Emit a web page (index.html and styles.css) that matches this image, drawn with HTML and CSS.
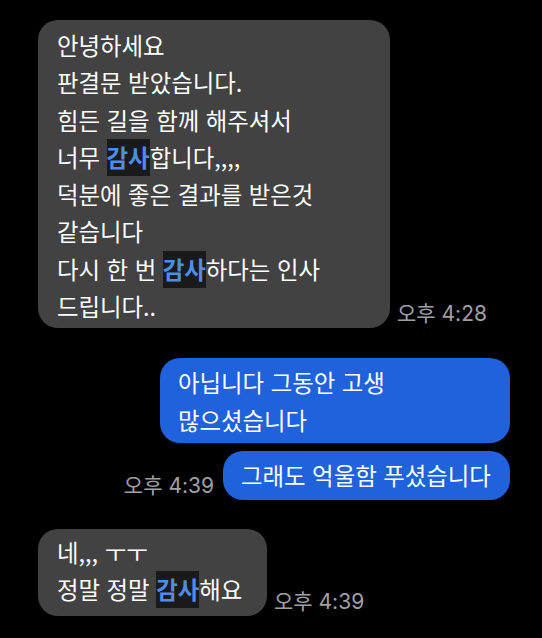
FILE: index.html
```html
<!DOCTYPE html>
<html lang="ko">
<head>
<meta charset="utf-8">
<link rel="stylesheet" href="styles.css">
</head>
<body>
<div class="chat">
  <div class="row left r1">
    <div class="bubble gray b1">안녕하세요<br>판결문 받았습니다.<br>힘든 길을 함께 해주셔서<br>너무 <span class="hl">감사</span>합니다,,,,<br>덕분에 좋은 결과를 받은것<br>같습니다<br>다시 한 번 <span class="hl">감사</span>하다는 인사<br>드립니다..</div>
    <div class="time">오후 4:28</div>
  </div>
  <div class="row right r2">
    <div class="bubble blue b2">아닙니다 그동안 고생<br>많으셨습니다</div>
  </div>
  <div class="row right r3">
    <div class="time">오후 4:39</div>
    <div class="bubble blue b3">그래도 억울함 푸셨습니다</div>
  </div>
  <div class="row left r4">
    <div class="bubble gray b4">네,,, ㅜㅜ<br>정말 정말 <span class="hl">감사</span>해요</div>
    <div class="time">오후 4:39</div>
  </div>
</div>
</body>
</html>
```
FILE: styles.css
```css
html, body {
  margin: 0;
  padding: 0;
  background: #000;
}
body {
  width: 542px;
  height: 638px;
  overflow: hidden;
  font-family: "Noto Sans CJK KR", "Noto Sans", sans-serif;
}
.chat {
  display: flex;
  flex-direction: column;
  padding: 20px 32px 0 38px;
}
.row {
  display: flex;
  align-items: flex-end;
  gap: 7px;
}
.right {
  justify-content: flex-end;
}
.r3 .time { margin-right: 2px; }
.r2 { margin-top: 30px; }
.r3 { margin-top: 8px; }
.r4 { margin-top: 29px; }
.bubble {
  color: #fff;
  font-size: 23.4px;
  line-height: 37.3px;
  border-radius: 20px;
  box-sizing: border-box;
  white-space: nowrap;
}
.gray { background: #424242; }
.blue { background: #1f62dc; }
.b1 {
  width: 352px;
  height: 308px;
  padding: 7px 19px 0 19px;
}
.b2 {
  width: 350px;
  height: 85px;
  padding: 5px 18px 0 18px;
  line-height: 38px;
}
.b3 {
  width: 287px;
  height: 49px;
  padding: 6px 18px 0 18px;
}
.b4 {
  width: 229px;
  height: 87px;
  padding: 5px 19px 0 19px;
}
.hl {
  display: inline-block;
  background: #1a1a1a;
  color: #4d8fe8;
  font-weight: bold;
  line-height: 37px;
  vertical-align: top;
}
.time {
  color: #a0a0a0;
  font-family: "Inter", "Noto Sans CJK KR", sans-serif;
  font-size: 21px;
  line-height: 26px;
  margin-bottom: 1px;
  white-space: nowrap;
}
```
